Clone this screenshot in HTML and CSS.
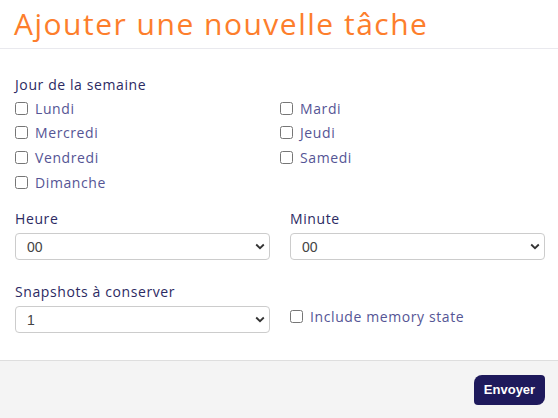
FILE: index.html
```html
<!DOCTYPE html>
<html lang="fr">
<head>
<meta charset="utf-8">
<link rel="stylesheet" href="styles.css">
</head>
<body>
<div class="modal">
  <div class="modal-header">
    <h1 class="title">Ajouter une nouvelle tâche</h1>
  </div>
  <div class="modal-body">
    <div class="group-label">Jour de la semaine</div>
    <div class="days">
      <label class="check"><input type="checkbox"><span>Lundi</span></label>
      <label class="check"><input type="checkbox"><span>Mardi</span></label>
      <label class="check"><input type="checkbox"><span>Mercredi</span></label>
      <label class="check"><input type="checkbox"><span>Jeudi</span></label>
      <label class="check"><input type="checkbox"><span>Vendredi</span></label>
      <label class="check"><input type="checkbox"><span>Samedi</span></label>
      <label class="check"><input type="checkbox"><span>Dimanche</span></label>
    </div>
    <div class="row time-row">
      <div class="field">
        <div class="field-label">Heure</div>
        <div class="select"><span>00</span><svg width="10" height="7" viewBox="0 0 10 7"><path d="M1.2 1.5 L5 5.2 L8.8 1.5" fill="none" stroke="#333" stroke-width="1.8"/></svg></div>
      </div>
      <div class="field">
        <div class="field-label">Minute</div>
        <div class="select"><span>00</span><svg width="10" height="7" viewBox="0 0 10 7"><path d="M1.2 1.5 L5 5.2 L8.8 1.5" fill="none" stroke="#333" stroke-width="1.8"/></svg></div>
      </div>
    </div>
    <div class="row snap-row">
      <div class="field">
        <div class="field-label">Snapshots à conserver</div>
        <div class="select"><span>1</span><svg width="10" height="7" viewBox="0 0 10 7"><path d="M1.2 1.5 L5 5.2 L8.8 1.5" fill="none" stroke="#333" stroke-width="1.8"/></svg></div>
      </div>
      <div class="field memory">
        <label class="check"><input type="checkbox"><span>Include memory state</span></label>
      </div>
    </div>
  </div>
  <div class="modal-footer">
    <button class="btn">Envoyer</button>
  </div>
</div>
</body>
</html>
```
FILE: styles.css
```css
* { box-sizing: border-box; }
html, body { margin: 0; padding: 0; background: #fff; }
body { font-family: "Open Sans", "DejaVu Sans", sans-serif; width: 558px; height: 418px; overflow: hidden; }
.modal { display: flex; flex-direction: column; height: 418px; }
.modal-header { height: 49px; border-bottom: 1px solid #e9e9ee; padding: 0 14px; }
.title { margin: 0; font-weight: 400; font-size: 30px; line-height: 48px; color: #fd7e2c; letter-spacing: 1.5px; white-space: nowrap; }
.modal-body { flex: 1; padding: 26px 13px 0 15px; }
.group-label, .field-label { color: #2c2a63; font-size: 14px; line-height: 20px; letter-spacing: 0.6px; }
.group-label { margin-bottom: 3px; }
.days { display: grid; grid-template-columns: 265px 1fr; row-gap: 4.7px; }
.check { display: flex; align-items: center; height: 20px; color: #555595; font-size: 14px; letter-spacing: 0.6px; }
.check input { margin: 0 7px 0 0; width: 13px; height: 13px; }
.row { display: grid; grid-template-columns: 1fr 1fr; column-gap: 20px; }
.time-row { margin-top: 17px; }
.snap-row { margin-top: 22px; }
.field-label { margin-bottom: 4px; }
.select { height: 27px; border: 1px solid #ccc; border-radius: 4px; display: flex; align-items: center; justify-content: space-between; padding: 0 4px 0 11px; font-family: "Liberation Sans", Arial, sans-serif; font-size: 14px; color: #444; }
.memory { display: flex; align-items: flex-end; padding-bottom: 7px; }
.modal-footer { height: 58px; background: #f4f4f4; border-top: 1px solid #dedede; display: flex; justify-content: flex-end; align-items: center; padding: 0 13px 0 0; }
.btn { background: #1e1a5c; color: #fff; border: none; font-family: "Liberation Sans", Arial, sans-serif; font-weight: 700; font-size: 13px; width: 71px; height: 30px; border-radius: 8px 4px 8px 4px; padding: 0; margin-top: 0; }
```
